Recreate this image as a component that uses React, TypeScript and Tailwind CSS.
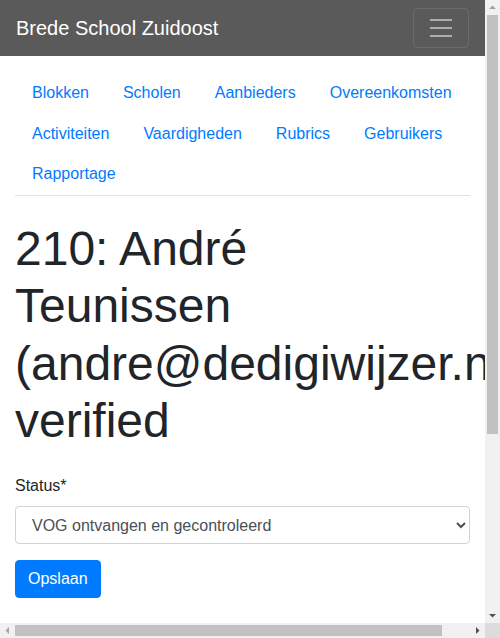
import React from "react";

const links = [
  "Blokken",
  "Scholen",
  "Aanbieders",
  "Overeenkomsten",
  "Activiteiten",
  "Vaardigheden",
  "Rubrics",
  "Gebruikers",
  "Rapportage",
];

function Arrow({ dir, active }: { dir: "up" | "down" | "left" | "right"; active?: boolean }) {
  const points = {
    up: "4,9 7.5,5.5 11,9",
    down: "4,6 11,6 7.5,9.5",
    left: "9,4 9,11 5.5,7.5",
    right: "6,4 6,11 9.5,7.5",
  }[dir];
  return (
    <div className="flex h-[15px] w-[15px] shrink-0 items-center justify-center">
      <svg width="15" height="15" viewBox="0 0 15 15">
        <polygon points={points} fill={active ? "#505050" : "#a3a3a3"} />
      </svg>
    </div>
  );
}

export default function App() {
  return (
    <div className="flex h-[638px] w-[500px] flex-col overflow-hidden bg-white font-['Liberation_Sans',Arial,sans-serif] text-base leading-6 text-[#212529]">
      <div className="flex min-h-0 flex-1">
        <div className="w-[485px] shrink-0 overflow-hidden">
          <nav className="flex h-14 items-center justify-between bg-[#5a5a5a] px-4">
            <a href="#" className="py-[5px] text-xl leading-[30px] text-white">
              Brede School Zuidoost
            </a>
            <button className="flex h-10 w-14 items-center justify-center rounded border border-white/10">
              <svg width="30" height="30" viewBox="0 0 30 30">
                <path
                  d="M4 7h22M4 15h22M4 23h22"
                  stroke="rgba(255,255,255,0.5)"
                  strokeWidth="2"
                  strokeMiterlimit="10"
                />
              </svg>
            </button>
          </nav>

          <div className="px-[15px] pb-[283px]">
            <ul className="mt-[16.6px] flex flex-wrap border-b border-[#dee2e6]">
              {links.map((l) => (
                <li key={l}>
                  <a
                    href="#"
                    className="block px-[17px] py-[8.35px] text-[#007bff]"
                  >
                    {l}
                  </a>
                </li>
              ))}
            </ul>

            <h1 className="mt-6 mb-6 text-5xl leading-[1.2] font-normal">
              210: André Teunissen (andre@dedigiwijzer.nl) verified
            </h1>

            <form>
              <div className="mb-4">
                <label className="mb-2 inline-block">Status*</label>
                <select className="block h-[38px] w-full rounded border border-[#ced4da] bg-white px-3 py-1.5 text-[#495057]">
                  <option>VOG ontvangen en gecontroleerd</option>
                </select>
              </div>
              <button
                type="button"
                className="h-[38px] rounded border border-[#007bff] bg-[#007bff] px-3 py-1.5 text-white"
              >
                Opslaan
              </button>
            </form>
          </div>
        </div>

        {/* vertical scrollbar */}
        <div className="flex w-[15px] flex-col bg-[#f1f1f1]">
          <Arrow dir="up" />
          <div className="mx-[2px] h-[419px] bg-[#c1c1c1]" />
          <div className="flex-1" />
          <Arrow dir="down" active />
        </div>
      </div>

      {/* horizontal scrollbar */}
      <div className="flex h-[15px] shrink-0">
        <div className="flex w-[485px] items-center bg-[#f1f1f1]">
          <Arrow dir="left" />
          <div className="h-[11px] w-[427px] bg-[#c1c1c1]" />
          <div className="flex-1" />
          <Arrow dir="right" active />
        </div>
        <div className="w-[15px] bg-[#dcdcdc]" />
      </div>
    </div>
  );
}
